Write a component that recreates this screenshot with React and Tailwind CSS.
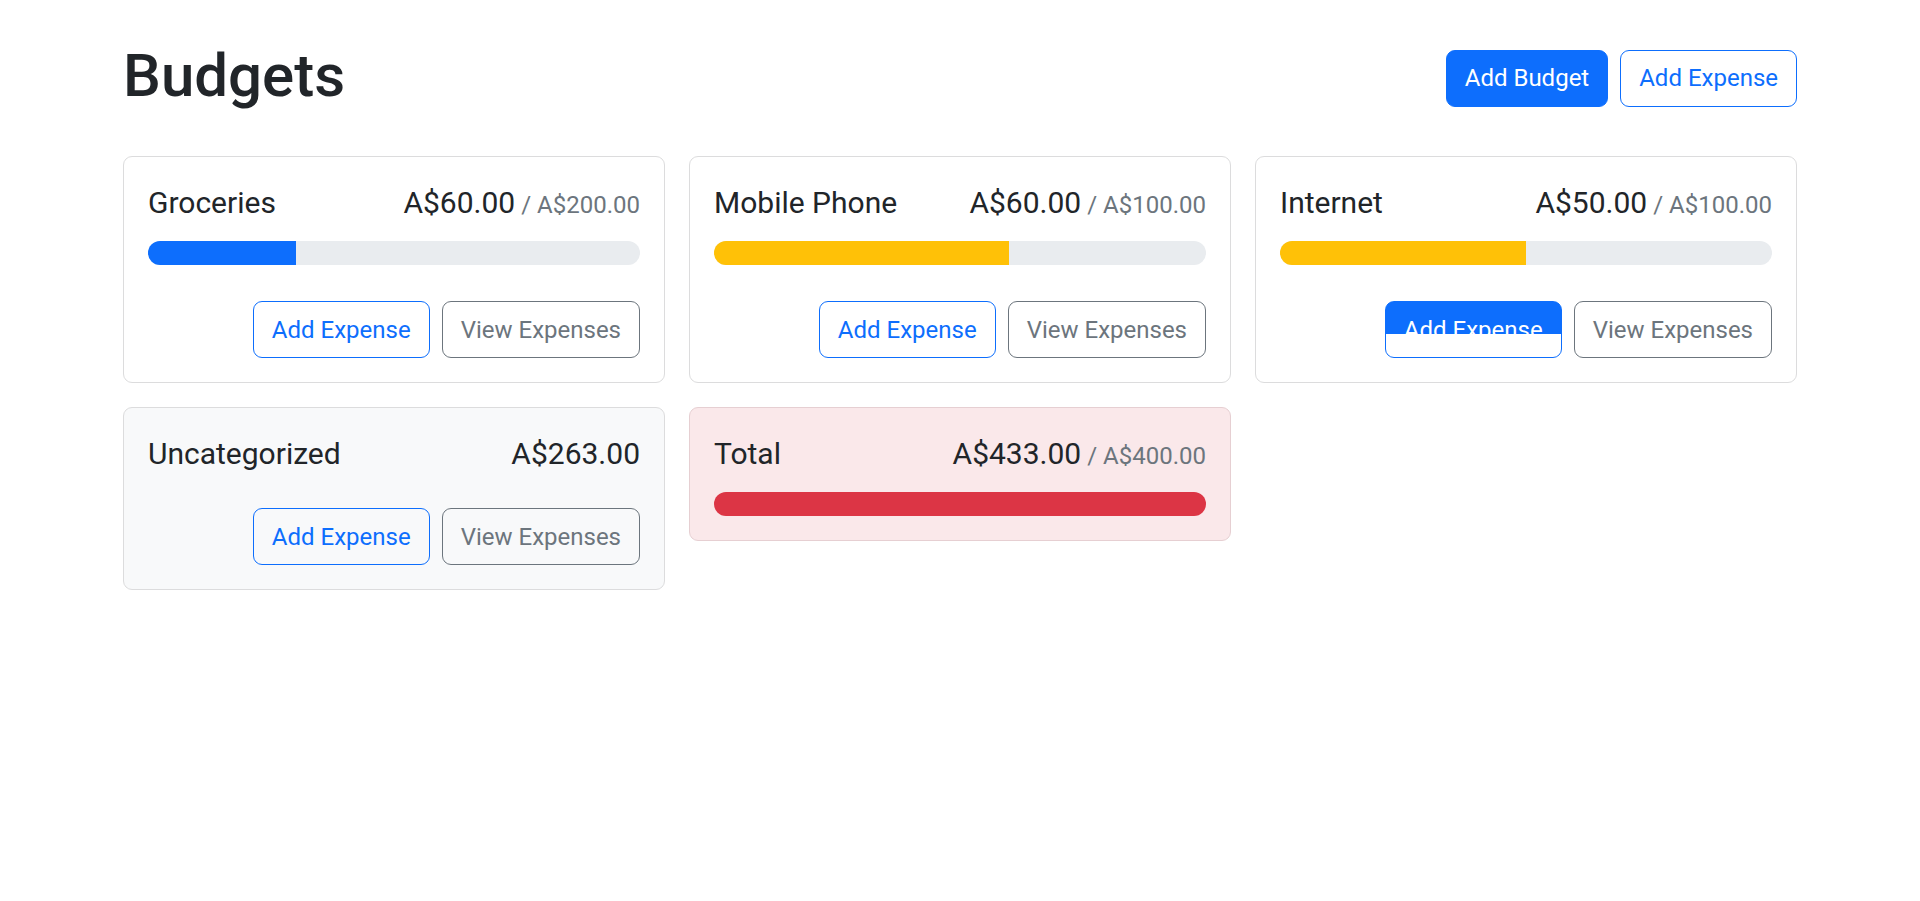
import React from 'react';

const budgets = [
  { id: 'groceries', name: 'Groceries', amount: 60, max: 200 },
  { id: 'mobile', name: 'Mobile Phone', amount: 60, max: 100 },
  { id: 'internet', name: 'Internet', amount: 50, max: 100, hovered: true },
];

const fmt = (n) => `A$${n.toFixed(2)}`;

const barColor = (amount, max) => {
  const ratio = amount / max;
  if (ratio < 0.5) return 'bg-[#0d6efd]';
  if (ratio < 0.75) return 'bg-[#ffc107]';
  return 'bg-[#dc3545]';
};

function BudgetCard({ name, amount, max, gray, hideButtons, hovered }) {
  let cardBg = 'bg-white';
  if (max && amount > max) cardBg = 'bg-[#fae8ea] border-[#e6cfd2]';
  else if (gray) cardBg = 'bg-[#f8f9fa]';

  return (
    <div className={`border border-[#dcdcdd] rounded-[9px] p-[24px] ${cardBg}`}>
      <div className="flex justify-between items-baseline text-[30px] leading-[1.2] pt-[4px] mb-[20px] text-[#212529]">
        <div className="mr-[12px]">{name}</div>
        <div className="flex items-baseline">
          {fmt(amount)}
          {max && <span className="text-[24px] text-[#6c757d] ml-[6px]">/ {fmt(max)}</span>}
        </div>
      </div>

      {max && (
        <div className="h-[24px] rounded-full bg-[#e9ecef] overflow-hidden flex">
          <div
            className={`h-full ${barColor(amount, max)}`}
            style={{ width: `${Math.min(100, (amount / max) * 100)}%` }}
          />
        </div>
      )}

      {/* mt collapses with the title's mb when there is no progress bar */}
      {!hideButtons && (
        <div className="flex gap-[12px] mt-[36px]">
          {hovered ? (
            <button className="ml-auto px-[18px] py-[9.5px] text-[24px] leading-[1.5] border border-[#0d6efd] rounded-[9px] text-white bg-[linear-gradient(to_bottom,#0d6efd_0%,#0d6efd_59%,#ffffff_59%,#ffffff_100%)]">
              Add Expense
            </button>
          ) : (
            <button className="ml-auto px-[18px] py-[9.5px] text-[24px] leading-[1.5] border border-[#0d6efd] rounded-[9px] text-[#0d6efd] bg-transparent">
              Add Expense
            </button>
          )}
          <button className="px-[18px] py-[9.5px] text-[24px] leading-[1.5] border border-[#6c757d] rounded-[9px] text-[#6c757d] bg-transparent">
            View Expenses
          </button>
        </div>
      )}
    </div>
  );
}

export default function App() {
  const totalAmount = budgets.reduce((t, b) => t + b.amount, 0) + 263;
  const totalMax = budgets.reduce((t, b) => t + b.max, 0);

  return (
    <div className="min-h-screen bg-white text-[#212529] font-['Roboto',sans-serif]">
      <div className="mx-auto w-[1710px] px-[18px] pt-[36px]">
        {/* Header */}
        <div className="flex items-center gap-[12px] mb-[36px]">
          <h1 className="mr-auto text-[60px] font-medium leading-[1.2] pt-[4px] mb-[8px]">Budgets</h1>
          <button className="px-[18px] py-[9.5px] text-[24px] leading-[1.5] border border-[#0d6efd] rounded-[9px] text-white bg-[#0d6efd]">
            Add Budget
          </button>
          <button className="px-[18px] py-[9.5px] text-[24px] leading-[1.5] border border-[#0d6efd] rounded-[9px] text-[#0d6efd] bg-white">
            Add Expense
          </button>
        </div>

        <div className="grid grid-cols-3 gap-[24px] items-start">
          {budgets.map((b) => (
            <BudgetCard key={b.id} {...b} />
          ))}
          <BudgetCard name="Uncategorized" amount={263} gray />
          <BudgetCard name="Total" amount={totalAmount} max={totalMax} gray hideButtons />
        </div>
      </div>
    </div>
  );
}
